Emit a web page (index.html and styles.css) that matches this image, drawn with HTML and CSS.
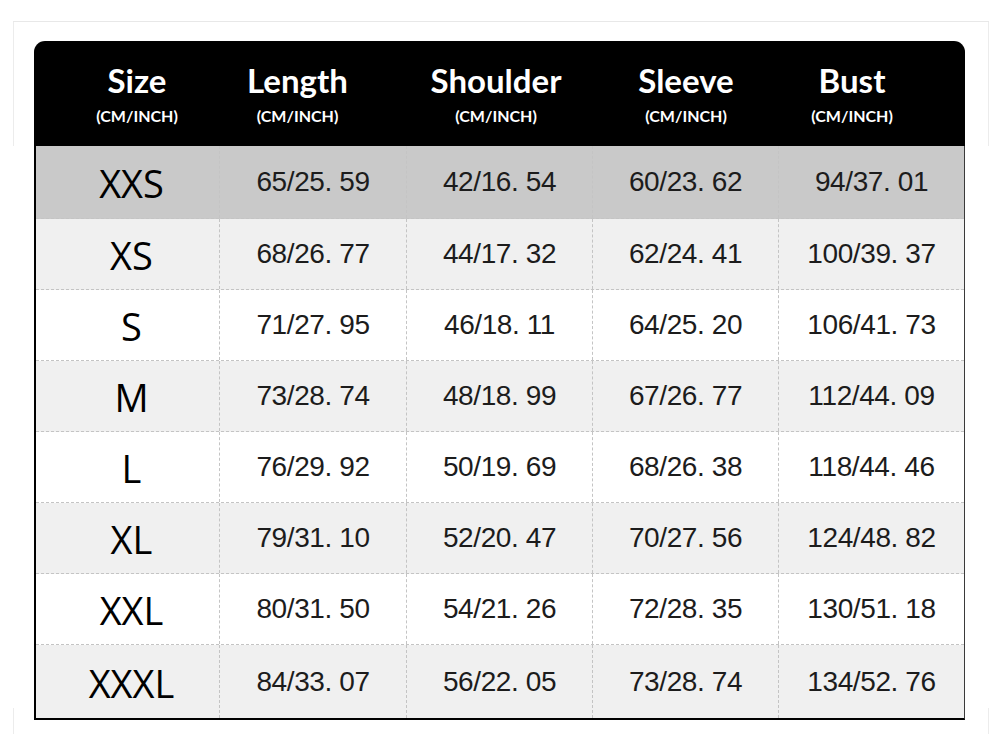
FILE: index.html
```html
<!DOCTYPE html>
<html lang="en">
<head>
<meta charset="utf-8">
<title>Size Chart</title>
<link rel="stylesheet" href="styles.css">
</head>
<body>
<main class="page">
  <section class="chart">
    <div class="head">
      <div class="hcell hcell--size"><span class="title">Size</span><span class="unit">(CM/INCH)</span></div>
      <div class="hcell hcell--length"><span class="title">Length</span><span class="unit">(CM/INCH)</span></div>
      <div class="hcell hcell--shoulder"><span class="title">Shoulder</span><span class="unit">(CM/INCH)</span></div>
      <div class="hcell"><span class="title">Sleeve</span><span class="unit">(CM/INCH)</span></div>
      <div class="hcell hcell--bust"><span class="title">Bust</span><span class="unit">(CM/INCH)</span></div>
    </div>
    <div class="body">
      <div class="row row--first"><div class="cell size">XXS</div><div class="cell">65/25. 59</div><div class="cell">42/16. 54</div><div class="cell">60/23. 62</div><div class="cell">94/37. 01</div></div>
      <div class="row row--alt"><div class="cell size">XS</div><div class="cell">68/26. 77</div><div class="cell">44/17. 32</div><div class="cell">62/24. 41</div><div class="cell">100/39. 37</div></div>
      <div class="row"><div class="cell size">S</div><div class="cell">71/27. 95</div><div class="cell">46/18. 11</div><div class="cell">64/25. 20</div><div class="cell">106/41. 73</div></div>
      <div class="row row--alt"><div class="cell size">M</div><div class="cell">73/28. 74</div><div class="cell">48/18. 99</div><div class="cell">67/26. 77</div><div class="cell">112/44. 09</div></div>
      <div class="row"><div class="cell size">L</div><div class="cell">76/29. 92</div><div class="cell">50/19. 69</div><div class="cell">68/26. 38</div><div class="cell">118/44. 46</div></div>
      <div class="row row--alt"><div class="cell size">XL</div><div class="cell">79/31. 10</div><div class="cell">52/20. 47</div><div class="cell">70/27. 56</div><div class="cell">124/48. 82</div></div>
      <div class="row"><div class="cell size">XXL</div><div class="cell">80/31. 50</div><div class="cell">54/21. 26</div><div class="cell">72/28. 35</div><div class="cell">130/51. 18</div></div>
      <div class="row row--alt row--last"><div class="cell size">XXXL</div><div class="cell">84/33. 07</div><div class="cell">56/22. 05</div><div class="cell">73/28. 74</div><div class="cell">134/52. 76</div></div>
    </div>
  </section>
</main>
</body>
</html>
```
FILE: styles.css
```css
* { box-sizing: border-box; }

html, body {
  margin: 0;
  padding: 0;
  background: #fff;
}

.page {
  width: 1000px;
  height: 734px;
  padding: 41px 0 0 34px;
  background:
    linear-gradient(#e8e8e8, #e8e8e8) 13px 21px / 976px 1px no-repeat,
    linear-gradient(#ececec, #ececec) 13px 21px / 1px 125px no-repeat,
    linear-gradient(#ececec, #ececec) 988px 21px / 1px 125px no-repeat,
    linear-gradient(#ececec, #ececec) 13px 708px / 1px 26px no-repeat,
    linear-gradient(#ececec, #ececec) 988px 708px / 1px 26px no-repeat;
}

.chart {
  width: 931px;
}

.head {
  height: 105px;
  background: #000;
  border-radius: 11px 11px 0 0;
  display: grid;
  grid-template-columns: 186px 187px 186px 186px 186px;
  color: #fff;
  font-family: Lato, "Open Sans", sans-serif;
  font-weight: 700;
}

.hcell {
  display: flex;
  flex-direction: column;
  align-items: center;
  padding-top: 20px;
}
.hcell--size { padding-left: 20px; }
.hcell--length { padding-right: 32px; }
.hcell--shoulder { padding-right: 8px; }
.hcell--bust { padding-right: 40px; }

.title {
  font-size: 33px;
  line-height: 38px;
}

.unit {
  font-size: 16px;
  line-height: 20px;
  margin-top: 7px;
}

.body {
  border-left: 2px solid #000;
  border-right: 1px solid #3a3a3a;
  border-bottom: 2px solid #000;
}

.row {
  display: grid;
  grid-template-columns: 184px 187px 186px 186px 1fr;
  height: 71px;
  background: #fff;
  border-bottom: 1px dashed #c4c4c4;
}
.row--alt { background: #f0f0f0; }
.row--first { height: 73px; background: #c9c9c9; }
.row--last { height: 73px; border-bottom: none; }

.cell {
  display: flex;
  align-items: center;
  justify-content: center;
  border-right: 1px dashed #c4c4c4;
  font-family: "Liberation Sans", Arial, sans-serif;
  font-size: 28px;
  letter-spacing: -0.4px;
  color: #1c1c1c;
}
.cell:last-child { border-right: none; }

.size {
  font-family: "Open Sans", sans-serif;
  font-size: 38px;
  letter-spacing: 0;
  color: #000;
  padding-left: 8px;
  padding-top: 2px;
}
```
